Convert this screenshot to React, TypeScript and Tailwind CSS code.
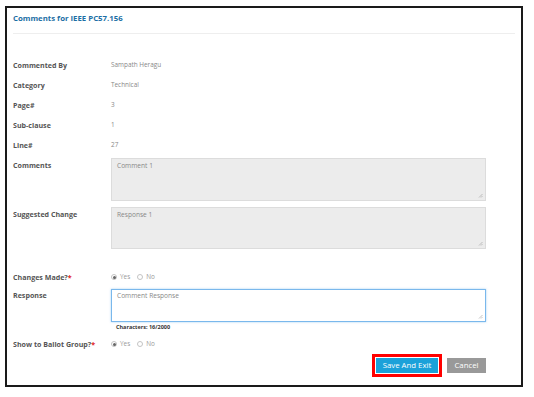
import React from "react";

const Label = ({ children, req }: { children: React.ReactNode; req?: boolean }) => (
  <div className="w-[98px] shrink-0 text-[7.1px] font-bold text-[#555] leading-[10px]">
    {children}
    {req && <span className="text-[#e02020]">*</span>}
  </div>
);

const Row = ({ label, value }: { label: string; value: string }) => (
  <div className="flex items-center h-[20px]">
    <Label>{label}</Label>
    <div className="text-[6.4px] text-[#888] leading-[10px]">{value}</div>
  </div>
);

const Radio = ({ checked, label }: { checked?: boolean; label: string }) => (
  <div className="flex items-center gap-[3px] mr-[7px]">
    <div className="w-[6px] h-[6px] rounded-full border border-[#c4c4c4] bg-white flex items-center justify-center">
      {checked && <div className="w-[3px] h-[3px] rounded-full bg-[#666]" />}
    </div>
    <span className="text-[6.4px] text-[#999] leading-[10px]">{label}</span>
  </div>
);

const Grip = () => (
  <svg className="absolute right-[2px] bottom-[2px]" width="5" height="5" viewBox="0 0 5 5">
    <path d="M4.5 1 L1 4.5 M4.5 3 L3 4.5" stroke="#aaa" strokeWidth="0.7" />
  </svg>
);

const Area = ({ value, box, text }: { value: string; box: string; text: string }) => (
  <div className={box}>
    <textarea readOnly defaultValue={value} className={text} />
    <Grip />
  </div>
);

export default function App() {
  return (
    <div
      className="ml-[5px] mt-[6px] w-[518px] h-[381px] border-2 border-[#1a1a1a] bg-white"
      style={{ fontFamily: '"Open Sans", "Liberation Sans", sans-serif' }}
    >
      <div className="px-[6px] pt-[4px]">
        <div className="text-[7.8px] font-bold text-[#1d6fa5] leading-[12px]">Comments for IEEE PC57.156</div>
        <div className="mt-[9px] h-px bg-[#eeeeee]" />
      </div>
      <div className="pl-[6px] pr-[35px] mt-[21px]">
        <Row label="Commented By" value="Sampath Heragu" />
        <Row label="Category" value="Technical" />
        <Row label="Page#" value="3" />
        <Row label="Sub-clause" value="1" />
        <Row label="Line#" value="27" />
        <div className="flex mt-[3px]">
          <div className="pt-[2px]"><Label>Comments</Label></div>
          <Area
            value="Comment 1"
            box="relative flex-1 h-[43px] bg-[#ececec] border border-[#dcdcdc]"
            text="block w-full h-full resize-none bg-transparent border-0 text-[6.6px] text-[#888] px-[5px] py-[2px] leading-[10px] outline-none"
          />
        </div>
        <div className="flex mt-[6px]">
          <div className="pt-[2px]"><Label>Suggested Change</Label></div>
          <Area
            value="Response 1"
            box="relative flex-1 h-[42px] bg-[#ececec] border border-[#dcdcdc]"
            text="block w-full h-full resize-none bg-transparent border-0 text-[6.6px] text-[#888] px-[5px] py-[2px] leading-[10px] outline-none"
          />
        </div>
        <div className="flex items-center h-[20px] mt-[18px]">
          <Label req>Changes Made?</Label>
          <Radio checked label="Yes" />
          <Radio label="No" />
        </div>
        <div className="flex mt-[2px]">
          <div className="pt-[1px]"><Label>Response</Label></div>
          <Area
            value="Comment Response"
            box="relative flex-1 h-[33px] bg-white border border-[#7ab8ec] shadow-[0_0_2px_rgba(102,175,233,0.6)]"
            text="block w-full h-full resize-none bg-transparent border-0 text-[6.6px] text-[#888] px-[5px] py-[1px] leading-[10px] outline-none"
          />
        </div>
        <div className="ml-[103px] text-[5.5px] font-bold text-[#333] leading-[10px]">Characters: 16/2000</div>
        <div className="flex items-center h-[20px] mt-[2px]">
          <Label req>Show to Ballot Group?</Label>
          <Radio checked label="Yes" />
          <Radio label="No" />
        </div>
        <div className="flex justify-end items-center">
          <div className="flex border-[3px] border-[#ff0000] p-px mr-[5px]">
            <button className="block h-[15px] w-[62px] bg-[#1ba1d9] text-white text-[7.8px] leading-[15px]">Save And Exit</button>
          </div>
          <button className="block h-[15px] w-[39px] bg-[#999999] text-white text-[7.8px] leading-[15px]">Cancel</button>
        </div>
      </div>
    </div>
  );
}
